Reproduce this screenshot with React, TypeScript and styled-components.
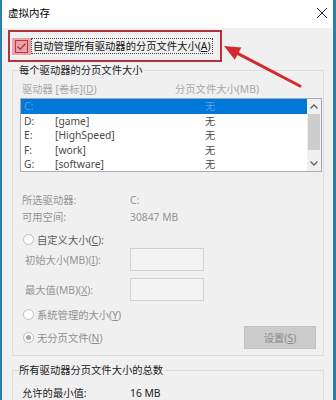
import React from "react";
import styled, { createGlobalStyle } from "styled-components";

const GlobalStyle = createGlobalStyle`
  html, body {
    margin: 0;
    padding: 0;
    background: #ffffff;
  }
  body {
    font-family: "Noto Sans", "Noto Sans CJK SC", sans-serif;
  }
`;

const drives = [
  { letter: "C:", label: "", size: "无", selected: true },
  { letter: "D:", label: "[game]", size: "无" },
  { letter: "E:", label: "[HighSpeed]", size: "无" },
  { letter: "F:", label: "[work]", size: "无" },
  { letter: "G:", label: "[software]", size: "无" },
];

const Radio = ({ checked }: { checked?: boolean }) => (
  <RadioDot $checked={checked} />
);

const Chevron = ({ up }: { up?: boolean }) => (
  <svg width="8" height="5" viewBox="0 0 8 5">
    <path
      d={up ? "M0.5 4.5 L4 1 L7.5 4.5" : "M0.5 0.5 L4 4 L7.5 0.5"}
      fill="none"
      stroke="#606060"
      strokeWidth="1.3"
    />
  </svg>
);

const App = () => {
  return (
    <>
      <GlobalStyle />
      <Window>
        <TitleBar>
          <span>虚拟内存</span>
          <svg width="12" height="12" viewBox="0 0 12 12">
            <path d="M1 1 L11 11 M11 1 L1 11" stroke="#2a2a2a" strokeWidth="1" />
          </svg>
        </TitleBar>

        <Highlight>
          <CheckHalo>
            <svg width="13" height="13" viewBox="0 0 13 13">
              <rect x="0.5" y="0.5" width="12" height="12" fill="none" stroke="#c2303a" />
              <path d="M2.5 6.5 L5.2 9.2 L10.5 3.5" fill="none" stroke="#c2303a" strokeWidth="1.3" />
            </svg>
          </CheckHalo>
          <FocusLabel>
            自动管理所有驱动器的分页文件大小(<Accel>A</Accel>)
          </FocusLabel>
        </Highlight>

        <Group>
          <Legend>每个驱动器的分页文件大小</Legend>
          <Headers>
            <span>
              驱动器 [卷标](<Accel>D</Accel>)
            </span>
            <span>分页文件大小(MB)</span>
          </Headers>
          <ListBox>
            <Rows>
              {drives.map((d) => (
                <Row key={d.letter} $selected={d.selected}>
                  <span>{d.letter}</span>
                  <span>{d.label}</span>
                  <span>{d.size}</span>
                </Row>
              ))}
            </Rows>
            <ScrollBar>
              <ScrollButton>
                <Chevron up />
              </ScrollButton>
              <Track>
                <Thumb />
              </Track>
              <ScrollButton>
                <Chevron />
              </ScrollButton>
            </ScrollBar>
          </ListBox>

          <InfoGrid>
            <span>所选驱动器:</span>
            <span>C:</span>
            <span>可用空间:</span>
            <span>30847 MB</span>
          </InfoGrid>

          <RadioRow $gap={5} $strong>
            <Radio />
            <span>
              自定义大小(<Accel>C</Accel>):
            </span>
          </RadioRow>

          <InputGrid>
            <span>
              初始大小(MB)(<Accel>I</Accel>):
            </span>
            <TextBox />
            <span>
              最大值(MB)(<Accel>X</Accel>):
            </span>
            <TextBox />
          </InputGrid>

          <RadioRow $gap={5}>
            <Radio />
            <span>
              系统管理的大小(<Accel>Y</Accel>)
            </span>
          </RadioRow>

          <BottomRow>
            <RadioRow $gap={0}>
              <Radio checked />
              <span>
                无分页文件(<Accel>N</Accel>)
              </span>
            </RadioRow>
            <SetButton>
              设置(<Accel>S</Accel>)
            </SetButton>
          </BottomRow>
        </Group>

        <Group $second>
          <Legend>所有驱动器分页文件大小的总数</Legend>
          <TotalGrid>
            <span>允许的最小值:</span>
            <span>16 MB</span>
          </TotalGrid>
        </Group>

        <Arrow width="92" height="56" viewBox="0 0 92 56">
          <line x1="82" y1="48" x2="20" y2="15.6" stroke="#d42a2e" strokeWidth="3" strokeLinecap="round" />
          <polygon points="6,8 23.4,9.4 16.8,21.8" fill="#d42a2e" />
        </Arrow>
      </Window>
    </>
  );
};

const Window = styled.div`
  position: relative;
  width: 336px;
  height: 400px;
  box-sizing: border-box;
  overflow: hidden;
  border-left: 2px solid #2c7fad;
  border-right: 3px solid #2c7fad;
  background: #f0f0f0;
  font-size: 10.3px;
  line-height: 14px;
  color: #2a2a2a;
`;

const TitleBar = styled.div`
  display: flex;
  align-items: center;
  justify-content: space-between;
  height: 28px;
  box-sizing: border-box;
  padding: 0 5px 2px 6px;
  background: #ffffff;
  color: #000000;
  font-size: 10.5px;
`;

const Highlight = styled.div`
  display: flex;
  align-items: center;
  width: 214px;
  height: 32px;
  box-sizing: border-box;
  margin: 2px 0 0 6px;
  padding-left: 2px;
  border: 2px solid #b3343e;
`;

const CheckHalo = styled.div`
  display: flex;
  align-items: center;
  justify-content: center;
  width: 19px;
  height: 17px;
  background: #e7a3aa;
`;

const FocusLabel = styled.span`
  height: 16px;
  box-sizing: border-box;
  padding: 0 1px;
  border: 1px dotted #444444;
  color: #111111;
  white-space: nowrap;
`;

const Accel = styled.span`
  text-decoration: underline;
`;

const Group = styled.fieldset<{ $second?: boolean }>`
  width: 312px;
  box-sizing: border-box;
  margin: ${({ $second }) => ($second ? "7px 0 0 10px" : "1px 0 0 10px")};
  padding: ${({ $second }) => ($second ? "8px 1px 6px 7px" : "5px 1px 6px 7px")};
  border: 1px solid #dcdcdc;
  min-inline-size: 0;
`;

const Legend = styled.legend`
  margin-left: -2px;
  padding: 0 1px;
  color: #222222;
  white-space: nowrap;
`;

const Headers = styled.div`
  display: grid;
  grid-template-columns: 153px 1fr;
  padding-left: 2px;
  color: #a8a8a8;
  white-space: nowrap;
`;

const ListBox = styled.div`
  display: flex;
  height: 74px;
  box-sizing: border-box;
  margin-top: 2px;
  border: 1px solid #a9abb0;
  background: #ffffff;
`;

const Rows = styled.div`
  flex: 1;
  overflow: hidden;
`;

const Row = styled.div<{ $selected?: boolean }>`
  display: grid;
  grid-template-columns: 31px 150px 1fr;
  align-items: center;
  height: 14.5px;
  padding-left: 3px;
  background: ${({ $selected }) => ($selected ? "#0078d7" : "transparent")};
  color: ${({ $selected }) => ($selected ? "#5aa3e6" : "#4a4a4a")};
  white-space: nowrap;
`;

const ScrollBar = styled.div`
  display: flex;
  flex-direction: column;
  width: 14px;
  background: #f0f0f0;
`;

const ScrollButton = styled.div`
  display: flex;
  align-items: center;
  justify-content: center;
  height: 15px;
`;

const Track = styled.div`
  flex: 1;
  display: flex;
  justify-content: center;
`;

const Thumb = styled.div`
  width: 12px;
  height: 36px;
  background: #cdcdcd;
`;

const InfoGrid = styled.div`
  display: grid;
  grid-template-columns: 108px 1fr;
  margin-top: 20px;
  padding-left: 2px;
  line-height: 17px;
  color: #959595;
`;

const RadioRow = styled.div<{ $gap: number; $strong?: boolean }>`
  display: flex;
  align-items: center;
  gap: 3px;
  height: 17px;
  margin-top: ${({ $gap }) => $gap}px;
  padding-left: 3px;
  color: ${({ $strong }) => ($strong ? "#5a5a5a" : "#8f8f8f")};
  white-space: nowrap;
`;

const RadioDot = styled.span<{ $checked?: boolean }>`
  display: inline-flex;
  align-items: center;
  justify-content: center;
  width: 11px;
  height: 11px;
  box-sizing: border-box;
  border: 1px solid #bdbdbd;
  border-radius: 50%;
  background: #ffffff;

  &::after {
    content: "";
    display: ${({ $checked }) => ($checked ? "block" : "none")};
    width: 5px;
    height: 5px;
    border-radius: 50%;
    background: #a6a6a6;
  }
`;

const InputGrid = styled.div`
  display: grid;
  grid-template-columns: 105px 74px;
  grid-auto-rows: 23px;
  row-gap: 7px;
  align-items: center;
  padding-left: 5px;
  color: #959595;
  white-space: nowrap;
`;

const TextBox = styled.div`
  height: 23px;
  box-sizing: border-box;
  border: 1px solid #d2d2d2;
  background: #f3f3f3;
`;

const BottomRow = styled.div`
  display: flex;
  align-items: center;
  justify-content: space-between;
  height: 23px;
  margin-top: 3px;
`;

const SetButton = styled.div`
  display: flex;
  align-items: center;
  justify-content: center;
  width: 72px;
  height: 23px;
  box-sizing: border-box;
  margin-right: 6px;
  border: 1px solid #bfbfbf;
  background: #cccccc;
  color: #8a8a8a;
`;

const TotalGrid = styled.div`
  display: grid;
  grid-template-columns: 108px 1fr;
  padding-left: 2px;
  line-height: 17px;
  color: #222222;
`;

const Arrow = styled.svg`
  position: absolute;
  left: 216px;
  top: 38px;
  pointer-events: none;
`;

export default App;
